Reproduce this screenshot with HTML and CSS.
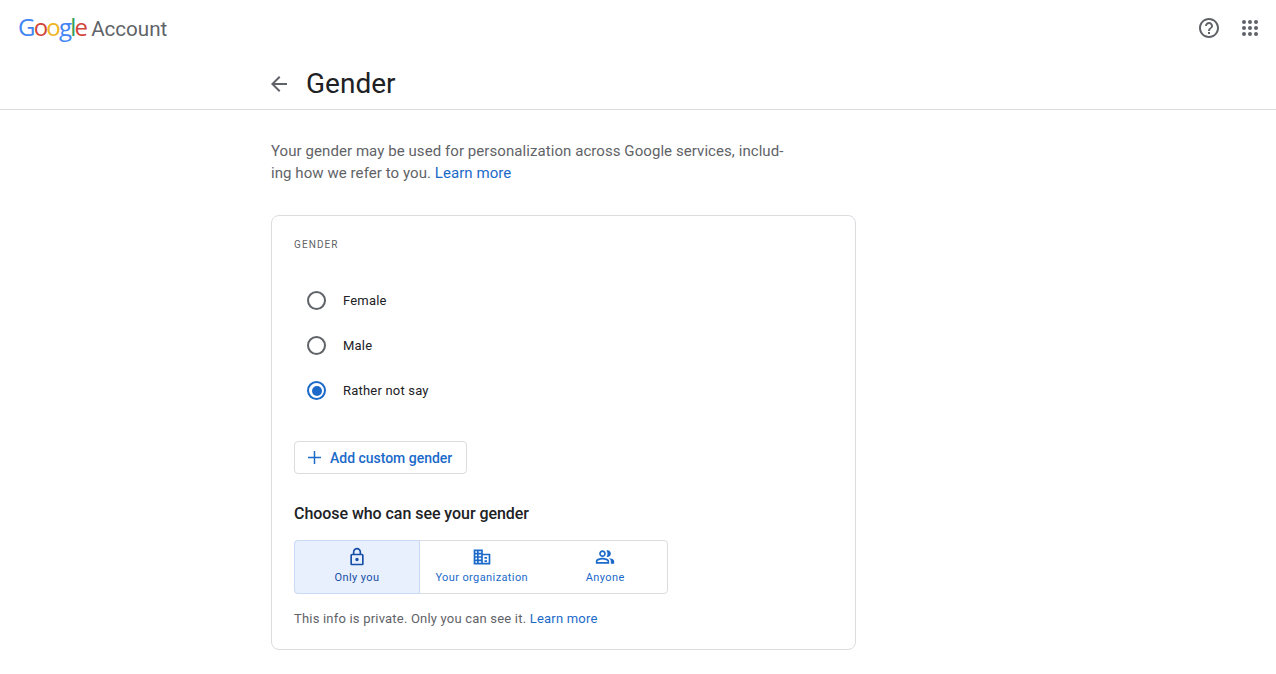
FILE: index.html
```html
<!DOCTYPE html>
<html lang="en">
<head>
<meta charset="utf-8">
<title>Gender</title>
<link rel="stylesheet" href="styles.css">
</head>
<body>
<header class="topbar">
  <div class="brand">
    <span class="google"><span class="g-blue">G</span><span class="g-red">o</span><span class="g-yellow">o</span><span class="g-blue">g</span><span class="g-green">l</span><span class="g-red">e</span></span>
    <span class="account">Account</span>
  </div>
  <div class="top-icons">
    <svg class="icon-help" viewBox="0 0 24 24" width="24" height="24"><path fill="#5f6368" d="M11 18h2v-2h-2v2zm1-16C6.48 2 2 6.48 2 12s4.48 10 10 10 10-4.48 10-10S17.52 2 12 2zm0 18c-4.41 0-8-3.59-8-8s3.59-8 8-8 8 3.59 8 8-3.59 8-8 8zm0-14c-2.21 0-4 1.79-4 4h2c0-1.1.9-2 2-2s2 .9 2 2c0 2-3 1.75-3 5h2c0-2.25 3-2.5 3-5 0-2.21-1.79-4-4-4z"/></svg>
    <svg class="icon-apps" viewBox="0 0 16 16" width="16" height="16"><g fill="#5f6368"><circle cx="2" cy="2" r="2"/><circle cx="8" cy="2" r="2"/><circle cx="14" cy="2" r="2"/><circle cx="2" cy="8" r="2"/><circle cx="8" cy="8" r="2"/><circle cx="14" cy="8" r="2"/><circle cx="2" cy="14" r="2"/><circle cx="8" cy="14" r="2"/><circle cx="14" cy="14" r="2"/></g></svg>
  </div>
</header>
<div class="titlebar">
  <svg class="back" viewBox="0 0 24 24" width="24" height="24"><path fill="#5f6368" d="M20 11H7.83l5.59-5.59L12 4l-8 8 8 8 1.41-1.41L7.83 13H20z"/></svg>
  <h1>Gender</h1>
</div>
<main class="content">
  <p class="intro">Your gender may be used for personalization across Google services, includ-<br>ing how we refer to you. <a href="#">Learn more</a></p>
  <section class="card">
    <h2 class="label">GENDER</h2>
    <div class="options">
      <div class="option"><span class="radio"></span><span>Female</span></div>
      <div class="option"><span class="radio"></span><span>Male</span></div>
      <div class="option"><span class="radio checked"></span><span>Rather not say</span></div>
    </div>
    <button class="add" type="button">
      <svg viewBox="0 0 14 14" width="13" height="13"><path fill="#1b6ac9" d="M6.200 0h1.600v6.200H14v1.600H7.800V14H6.200V7.800H0V6.200h6.200z"/></svg>
      <span>Add custom gender</span>
    </button>
    <h3 class="who">Choose who can see your gender</h3>
    <div class="segments">
      <div class="segment active">
        <svg viewBox="0 0 24 24" width="20" height="20"><path fill="#174ea6" d="M18 8h-1V6c0-2.76-2.240-5-5-5S7 3.240 7 6v2H6c-1.100 0-2 .9-2 2v10c0 1.100.9 2 2 2h12c1.100 0 2-.9 2-2V10c0-1.100-.9-2-2-2zM9 6c0-1.660 1.340-3 3-3s3 1.340 3 3v2H9V6zm9 14H6V10h12v10zm-6-3c1.100 0 2-.9 2-2s-.9-2-2-2-2 .9-2 2 .9 2 2 2z"/></svg>
        <span>Only you</span>
      </div>
      <div class="segment">
        <svg viewBox="0 0 24 24" width="20" height="20"><path fill="#1b6ac9" d="M2 3h11v5h9v13H2V3zm2 2v2h2V5H4zm4 0v2h3V5H8zM4 9v2h2V9H4zm4 0v2h3V9H8zm-4 4v2h2v-2H4zm4 0v2h3v-2H8zm-4 4v2h2v-2H4zm4 0v2h3v-2H8zm5-7v9h7v-9h-7zm2 2h3v2h-3v-2zm0 4h3v2h-3v-2z"/></svg>
        <span>Your organization</span>
      </div>
      <div class="segment">
        <svg viewBox="0 0 24 24" width="20" height="20"><path fill="#1b6ac9" d="M9 13c-2.700 0-8 1.300-8 4v3h16v-3c0-2.700-5.300-4-8-4zm6 5H3v-1c0-.6 3-2 6-2s6 1.400 6 2v1zM9 12c2.200 0 4-1.800 4-4s-1.800-4-4-4-4 1.800-4 4 1.800 4 4 4zm0-6c1.100 0 2 .9 2 2s-.9 2-2 2-2-.9-2-2 .9-2 2-2zm6 6c2.200 0 4-1.800 4-4s-1.800-4-4-4c-.5 0-.9.100-1.300.2.800 1 1.300 2.400 1.300 3.800s-.5 2.800-1.300 3.800c.4.100.8.200 1.300.2zm1.700 1.100c1.400 1 2.300 2.300 2.300 3.900v3h4v-3c0-2.300-3.500-3.500-6.300-3.900z"/></svg>
        <span>Anyone</span>
      </div>
    </div>
    <p class="note">This info is private. Only you can see it. <a href="#">Learn more</a></p>
  </section>
</main>
</body>
</html>
```
FILE: styles.css
```css
* { box-sizing: border-box; }
html, body { margin: 0; height: 674px; overflow: hidden; }
body { background: #fff; font-family: Roboto, "Liberation Sans", sans-serif; color: #202124; }
a { color: #1b6ac9; text-decoration: none; }

.topbar { height: 56px; display: flex; align-items: center; justify-content: space-between; padding: 0 18px; }
.brand { display: flex; align-items: baseline; gap: 5px; padding-bottom: 4px; }
.google { font-family: "Open Sans", sans-serif; font-size: 24px; letter-spacing: -1.800px; font-weight: 500; }
.g-blue { color: #4285f4; }
.g-red { color: #d2453a; }
.g-yellow { color: #eeb522; }
.g-green { color: #2f9e58; }
.account { font-size: 20.6px; color: #5f6368; }
.top-icons { display: flex; align-items: center; gap: 21px; }

.titlebar { height: 54px; display: flex; align-items: center; gap: 15px; padding: 2px 0 0 267px; border-bottom: 1px solid #dadce0; }
.titlebar h1 { margin: 0; font-size: 28px; font-weight: 400; line-height: 50px; }

.content { padding-left: 271px; }
.intro { margin: 30px 0 31px; font-size: 15px; line-height: 22px; color: #5f6368; letter-spacing: .07px; }
.card { width: 585px; height: 435px; border: 1px solid #dadce0; border-radius: 8px; padding: 0 22px; }
.label { margin: 23px 0 0; font-size: 10px; line-height: 12px; font-weight: 400; letter-spacing: 1.100px; color: #5f6368; }
.options { margin-top: 27px; display: flex; flex-direction: column; }
.option { height: 45px; display: flex; align-items: center; gap: 17px; padding-left: 13px; font-size: 13px; letter-spacing: .2px; }
.radio { width: 19px; height: 19px; border: 2px solid #5f6368; border-radius: 50%; display: flex; align-items: center; justify-content: center; }
.radio.checked { border-color: #1b6ac9; }
.radio.checked::after { content: ""; width: 10px; height: 10px; border-radius: 50%; background: #1b6ac9; }

.add { margin-top: 28px; height: 33px; width: 173px; display: flex; align-items: center; gap: 9px; padding: 0 0 0 13px; background: #fff; border: 1px solid #dadce0; border-radius: 4px; color: #1b6ac9; font: 500 14px Roboto, sans-serif; letter-spacing: -.02px; }
.who { margin: 30px 0 0; font-size: 16px; line-height: 20px; font-weight: 500; letter-spacing: -.05px; }
.segments { margin-top: 16px; width: 374px; height: 54px; display: flex; border: 1px solid #dadce0; border-radius: 4px; }
.segment { flex: 1; display: flex; flex-direction: column; align-items: center; justify-content: center; gap: 3px; padding-bottom: 2px; font-size: 11px; letter-spacing: .4px; color: #1b6ac9; }
.segment svg { display: block; }
.segment span { line-height: 16px; }
.segment.active { flex: 0 0 126px; background: #e8f0fe; color: #174ea6; margin: -1px 0 -1px -1px; border: 1px solid #c9daf5; border-radius: 4px 0 0 4px; }
.note { margin: 16px 0 0; font-size: 13px; line-height: 17px; color: #5f6368; letter-spacing: .2px; }
```
